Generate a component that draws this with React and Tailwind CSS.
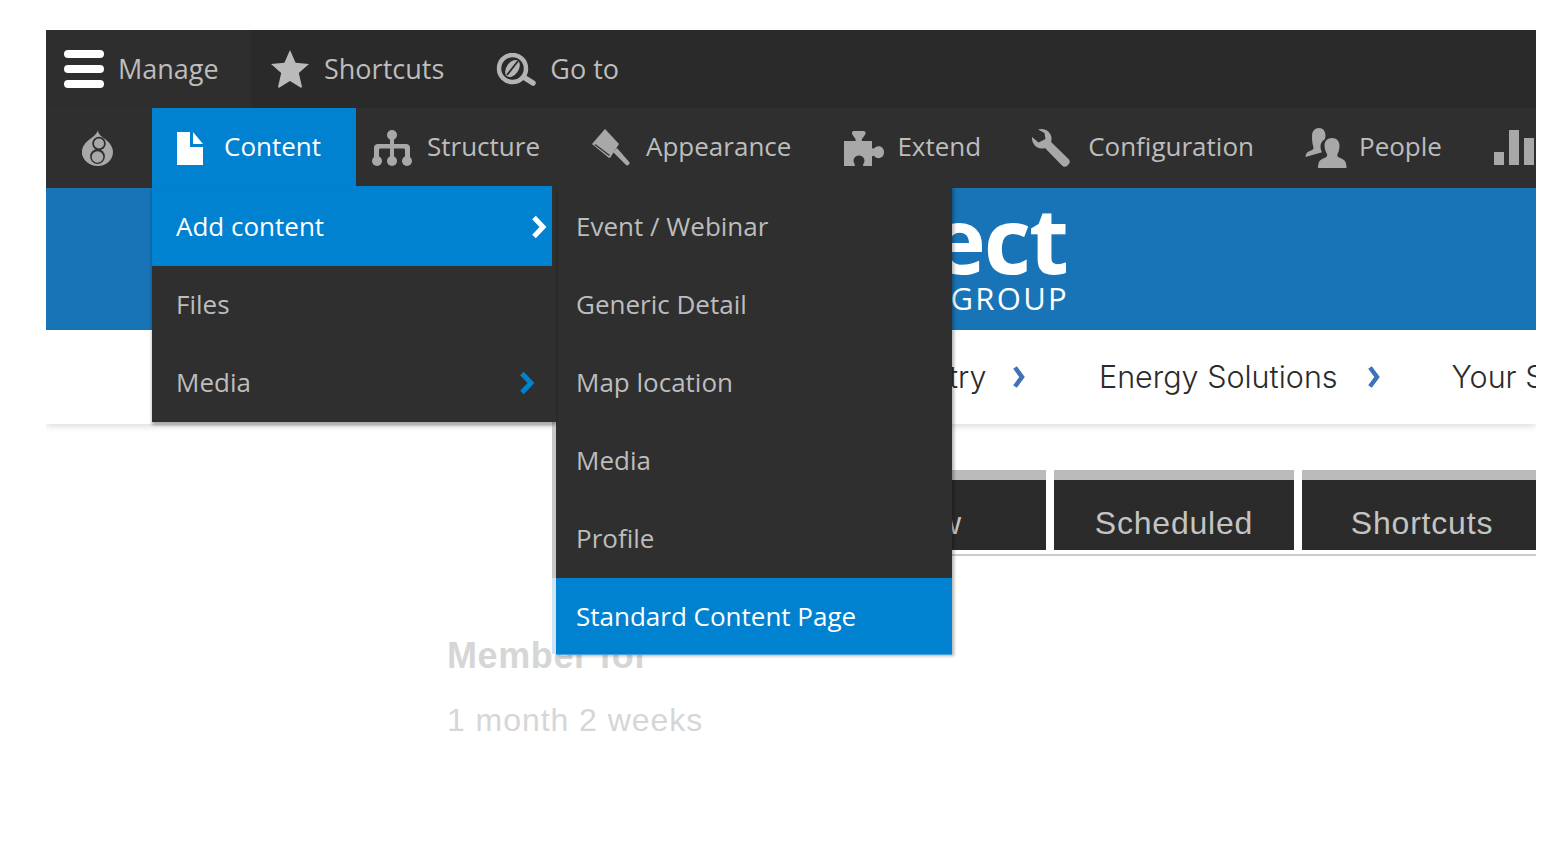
import React from 'react';

const DrupalIcon = () => (
  <svg width="32" height="36" viewBox="0 0 32 36" className="shrink-0">
    <path fill="#a8a8a8" d="M16 0c0 4 3 6 7 9 5 4 8 8 8 13 0 8-7 14-15 14S0 30 0 22c0-6 4-10 8-13 3-2 7-5 8-9z" />
    <circle cx="17" cy="13.500" r="6.800" fill="#2f2f2f" />
    <circle cx="15.500" cy="26.500" r="7.400" fill="#2f2f2f" />
    <circle cx="17" cy="13.500" r="5" fill="#a8a8a8" />
    <circle cx="15.500" cy="27" r="5.800" fill="#a8a8a8" />
    <path fill="#a8a8a8" d="M2 20c1 5 3 10 7 13 2 2 5 3 7 3-8 0-16-6-16-14z" />
  </svg>
);

const HamburgerIcon = () => (
  <svg width="40" height="38" viewBox="0 0 40 38" fill="#fff" className="shrink-0">
    <rect x="0" y="0" width="40" height="8" rx="4" />
    <rect x="0" y="15" width="40" height="8" rx="4" />
    <rect x="0" y="30" width="40" height="8" rx="4" />
  </svg>
);

const StarIcon = () => (
  <svg width="38" height="38" viewBox="0 0 38 38" fill="#bababa" className="shrink-0">
    <path d="M19 0l5.600 12.800 13.400 1.200-10.200 9 3.100 13.500c.2 1-.6 1.500-1.400 1L19 31l-10.500 6.500c-.8.500-1.600 0-1.400-1L10.200 23 0 14l13.400-1.200z" />
  </svg>
);

const GotoIcon = () => (
  <svg width="40" height="33" viewBox="0 0 40 33" fill="none" className="shrink-0">
    <circle cx="16.500" cy="15.500" r="13.500" stroke="#b4b4b4" strokeWidth="4.500" />
    <path d="M29 25l8 5" stroke="#b4b4b4" strokeWidth="5.500" strokeLinecap="round" />
    <ellipse cx="16.500" cy="15.500" rx="6" ry="9.500" transform="rotate(35 16.500 15.500)" fill="#b4b4b4" />
    <path d="M11 22l11-14" stroke="#2a2a2a" strokeWidth="1.800" />
  </svg>
);

const FileIcon = () => (
  <svg width="26" height="33" viewBox="0 0 26 33" fill="#fff" className="shrink-0">
    <path d="M0 0h13v15h13v18H0z" />
    <path d="M16 0l10 12H16z" />
  </svg>
);

const StructureIcon = () => (
  <svg width="40" height="36" viewBox="0 0 40 36" fill="#a8a8a8" className="shrink-0">
    <circle cx="20" cy="5" r="5" />
    <circle cx="5" cy="31" r="5" />
    <circle cx="20" cy="31" r="5" />
    <circle cx="35" cy="31" r="5" />
    <path d="M18 6h4v8h12c2.500 0 4 1.500 4 4v10h-5v-8c0-1-.5-1.500-1.500-1.500H22V28h-4v-9.500H8.500C7.500 18.500 7 19 7 20v8H2V18c0-2.500 1.500-4 4-4h12z" />
  </svg>
);

const BrushIcon = () => (
  <svg width="38" height="38" viewBox="0 0 38 38" fill="#a8a8a8" className="shrink-0">
    <path d="M13 0l14 15-9 14-1.500-.5L0 15z" />
    <path d="M3 15.500l14.500 11" stroke="#2f2f2f" strokeWidth="1.300" fill="none" />
    <path d="M21 23l4-4 12.200 14c1.500 1.800-1.400 4.500-3.200 3z" />
  </svg>
);

const PuzzleIcon = () => (
  <svg width="40" height="35" viewBox="0 0 40 35" fill="#a8a8a8" className="shrink-0">
    <path d="M0 10h11.500c1.200-2.500-2.500-4-3.500-7.500C7.500 1 8.500 0 10 0h9.500c1.500 0 2.500 1 2 2.500-1 3.500-4.700 5-3.500 7.500h10v7c1.500 1 1.800.5 3.500-.8 3-2.200 8.500-.6 8.500 5s-5.500 7.200-8.500 5c-1.700-1.300-2-1.800-3.500-.8V35h-8.500c-1.700-1.500 2.300-3.500.5-7.500-2-4-8-4-10 0-1.800 4 2.200 6 .5 7.500H0z" />
  </svg>
);

const WrenchIcon = () => (
  <svg width="38" height="38" viewBox="0 0 38 38" fill="#a8a8a8" className="shrink-0">
    <path d="M9.500 0c5.500 0 10.500 4.500 10 10.500 0 1-.2 1.500-.4 2.500l17.400 17c1.800 1.800 1.500 3.800 0 5.500l-1 1c-1.700 1.700-4 1.800-5.500 0L13 19c-1.200.4-2.500.6-3.700.5C3.500 19-.5 14 0 8l6.500 5.500L13.500 10l-1-6L6 .6C7 .2 8.200 0 9.500 0z" />
  </svg>
);

const PeopleIcon = () => (
  <svg width="42" height="40" viewBox="0 0 42 40" fill="#a8a8a8" className="shrink-0">
    <path d="M14 0c4 0 6.500 3 6.500 7.500 0 2-.4 3-1 4-2.500 1.500-4 4-4 7 0 2.500.8 4.700 1.500 5.800L.5 29c0-3.500 2-5.500 5.500-6.500 2-.6 3-2 2.300-4C7.400 16 7 12.500 7 8c0-5 3-8 7-8z" />
    <path d="M27 10c4.500 0 7.500 3 7.500 7.500 0 4-1 6.500-2 8.500-.8 2 .5 3.200 2.500 4 4 1.300 6.500 3 6.500 10H13c0-7 2.500-8.700 6.500-10 2-.8 3.300-2 2.500-4-1-2-2.500-4.500-2.500-8.500C19.500 13 22.500 10 27 10z" />
  </svg>
);

const ReportsIcon = () => (
  <svg width="40" height="35" viewBox="0 0 40 35" fill="#a8a8a8" className="shrink-0">
    <rect x="0" y="22" width="10" height="13" />
    <rect x="15" y="0" width="10" height="35" />
    <rect x="30" y="8" width="10" height="27" />
  </svg>
);

const Chevron = ({ color, width = 16, height = 24, stroke = 5 }) => (
  <svg width={width} height={height} viewBox={`0 0 ${width} ${height}`} fill="none" className="shrink-0">
    <path d={`M3 2.500L${width - 4} 12 3 21.500`} stroke={color} strokeWidth={stroke} />
  </svg>
);

const TrayItem = ({ icon, label, className }) => (
  <div className={`flex items-center shrink-0 ${className}`}>
    {icon}
    <span className="text-[26px] leading-none -mt-1 text-[#bdbdbd]">{label}</span>
  </div>
);

const MenuRow = ({ label, active, chevron, className }) => (
  <div className={`flex items-center justify-between text-[26px] ${className} ${active ? 'bg-[#0082d0] text-white' : 'text-[#bdbdbd]'}`}>
    <span className="-mt-[2px]">{label}</span>
    {chevron}
  </div>
);

const Tab = ({ label }) => (
  <div className="w-60 h-20 shrink-0 bg-[#2b2b2b] border-t-[10px] border-[#bbbbbb] flex items-center justify-center pt-4">{label}</div>
);

export default function App() {
  return (
    <div className="w-[1562px] h-[866px] bg-white overflow-hidden pl-[46px] pt-[30px]">
      <div className="relative w-[1490px] h-[836px] overflow-hidden font-['Open_Sans',sans-serif]">
        {/* top bar */}
        <div className="h-[78px] bg-[#2a2a2a] flex items-center whitespace-nowrap">
          <div className="h-full flex items-center bg-[#2e2e2e] pl-[18px] w-[205px] gap-[14px] shrink-0">
            <HamburgerIcon />
            <span className="text-[27px] text-[#bdbdbd]">Manage</span>
          </div>
          <div className="flex items-center gap-[15px] ml-5"><StarIcon /><span className="text-[27px] text-[#bdbdbd]">Shortcuts</span></div>
          <div className="flex items-center gap-[14px] ml-[52px]"><GotoIcon /><span className="text-[27px] text-[#bdbdbd]">Go to</span></div>
        </div>

        {/* tray */}
        <div className="h-20 bg-[#2f2f2f] flex items-center whitespace-nowrap">
          <div className="w-[106px] pl-9 flex items-center shrink-0"><DrupalIcon /></div>
          <div className="w-[204px] h-full shrink-0 flex items-center bg-[#0082d0] pl-[25px] gap-[21px]">
            <FileIcon />
            <span className="text-[26px] leading-none -mt-1 text-white">Content</span>
          </div>
          <TrayItem className="ml-4 gap-[15px]" icon={<StructureIcon />} label="Structure" />
          <TrayItem className="ml-[52px] gap-4" icon={<BrushIcon />} label="Appearance" />
          <TrayItem className="ml-[53px] gap-[13px]" icon={<PuzzleIcon />} label="Extend" />
          <TrayItem className="ml-[51px] gap-[18px]" icon={<WrenchIcon />} label="Configuration" />
          <TrayItem className="ml-[51px] gap-[12px]" icon={<PeopleIcon />} label="People" />
          <div className="ml-[52px] -mt-[2px] flex items-center shrink-0"><ReportsIcon /></div>
        </div>

        {/* site header */}
        <div className="h-[142px] bg-[#1874b6] flex flex-col items-end pr-[469px] text-white">
          <div className="text-[92px] leading-none font-bold tracking-[-2px] mt-[5px]">ect</div>
          <div className="text-[31px] leading-none tracking-[2.300px] -mt-[2px] -mr-[2px]">GROUP</div>
        </div>

        {/* breadcrumb */}
        <div className="h-[94px] bg-white flex items-center pl-[904px] whitespace-nowrap font-['Inter',sans-serif] font-light text-[30.500px] text-[#2b2b2b] shadow-[0_3px_6px_rgba(0,0,0,0.12)]">
          <span className="w-9 shrink-0 text-right -ml-[1px]">try</span>
          <span className="ml-[27px]"><Chevron color="#3f73b8" width={14} stroke={4.500} /></span>
          <span className="ml-[73px]">Energy Solutions</span>
          <span className="ml-[29px]"><Chevron color="#3f73b8" width={14} stroke={4.500} /></span>
          <span className="ml-[71px]">Your Solutions</span>
        </div>

        {/* tabs */}
        <div className="pt-[46px] pl-[760px] flex gap-2 whitespace-nowrap font-['Liberation_Sans',sans-serif] text-[32px] tracking-[0.800px] text-[#c4c4c4]">
          <Tab label="View" />
          <Tab label="Scheduled" />
          <Tab label="Shortcuts" />
        </div>
        <div className="mt-1 ml-[510px] h-[2px] bg-[#cccccc]"></div>

        {/* profile */}
        <div className="pl-[401px] pt-[82px] font-['Liberation_Sans',sans-serif] text-[#d6d6d6]">
          <div className="text-[36px] font-bold leading-none tracking-[0.600px]">Member for</div>
          <div className="text-[32px] mt-[30px] leading-none tracking-[0.950px]">1 month 2 weeks</div>
        </div>

        {/* menus */}
        <div className="absolute z-10 left-[106px] top-[156px] w-[404px] bg-[#2f2f2f] shadow-[0_3px_3px_rgba(0,0,0,0.35)]">
          <MenuRow active label="Add content" className="w-[400px] h-20 pt-[2px] pl-6 pr-[5px]" chevron={<Chevron color="#fff" />} />
          <MenuRow label="Files" className="w-[400px] h-[78px] pl-6" />
          <MenuRow label="Media" className="w-[400px] h-[78px] pl-6 pr-[17px]" chevron={<Chevron color="#0082d0" />} />
        </div>
        <div className="absolute left-[510px] top-[156px] w-[396px] bg-[#2f2f2f] shadow-[-4px_0_0_#c8c8c8,2px_2px_3px_rgba(0,0,0,0.3)]">
          <MenuRow label="Event / Webinar" className="h-20 pt-[2px] pl-5" />
          <MenuRow label="Generic Detail" className="h-[78px] pl-5" />
          <MenuRow label="Map location" className="h-[78px] pl-5" />
          <MenuRow label="Media" className="h-[78px] pl-5" />
          <MenuRow label="Profile" className="h-[78px] pl-5" />
          <MenuRow active label="Standard Content Page" className="h-[76px] pt-[2px] pl-5 shadow-[-4px_0_0_#cfe3f3,0_1px_0_#4aa3e0]" />
        </div>
      </div>
    </div>
  );
}
